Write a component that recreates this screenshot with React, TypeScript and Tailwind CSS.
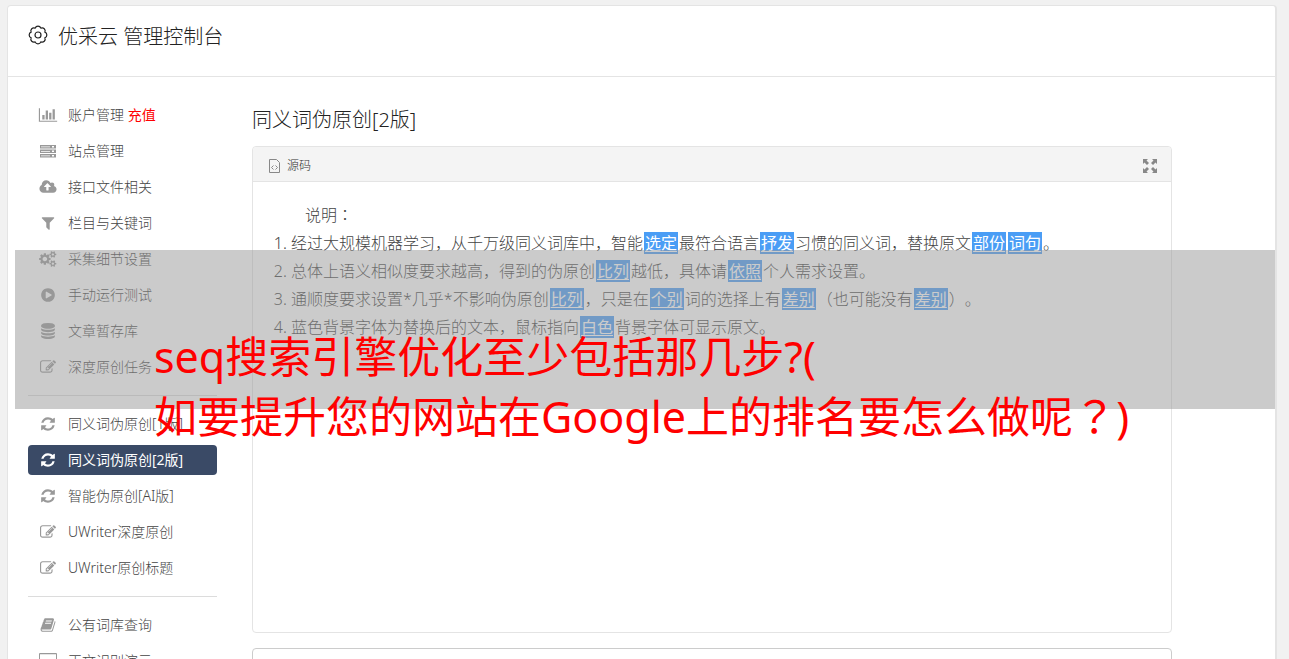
import { Fragment } from "react";
import type { ReactNode } from "react";

interface IconProps {
  viewBox?: string;
  className?: string;
  children: ReactNode;
}

function Icon({ viewBox = "0 0 1792 1792", className = "h-4 w-5", children }: IconProps) {
  return (
    <svg viewBox={viewBox} fill="currentColor" className={className} aria-hidden="true">
      {children}
    </svg>
  );
}

const icons = {
  chart: (
    <Icon viewBox="0 0 2048 1792">
      <path d="M640 896v512h-256v-512h256zm384-512v1024h-256v-1024h256zm1024 1152v128h-2048v-1536h128v1408h1920zm-640-896v768h-256v-768h256zm384-384v1152h-256v-1152h256z" />
    </Icon>
  ),
  server: (
    <Icon viewBox="0 0 20 16">
      <path
        fillRule="evenodd"
        d="M2 2h16v3.500h-16zM3 3.500v.8h9v-.8zM14 3v1.500h2v-1.500zM2 6.500h16v3.500h-16zM3 8v.8h9v-.8zM14 7.500v1.500h2v-1.500zM2 11h16v3.500h-16zM3 12.500v.8h9v-.8zM14 12v1.500h2v-1.500z"
      />
    </Icon>
  ),
  upload: (
    <Icon viewBox="-64 0 1920 1792">
      <path d="M1216 864q0-14-9-23l-352-352q-9-9-23-9t-23 9l-351 351q-10 12-10 24 0 14 9 23t23 9h224v352q0 13 9.500 22.500t22.500 9.500h192q13 0 22.500-9.500t9.500-22.500v-352h224q13 0 22.500-9.500t9.500-22.500zm640 288q0 159-112.500 271.500t-271.500 112.500h-1088q-185 0-316.500-131.500t-131.500-316.500q0-130 70-240t188-165q-2-30-2-43 0-212 150-362t362-150q156 0 285.500 87t188.500 231q71-62 166-62 106 0 181 75t75 181q0 76-41 138 130 31 213.500 135.500t83.500 238.500z" />
    </Icon>
  ),
  filter: (
    <Icon>
      <path d="M1595 295q17 41-14 70l-493 493v742q0 42-39 59-13 5-25 5-27 0-45-19l-256-256q-19-19-19-45v-486l-493-493q-31-29-14-70 17-39 59-39h1280q42 0 59 39z" />
    </Icon>
  ),
  cogs: (
    <Icon viewBox="0 0 1856 1792">
      <path d="M832 896q0-106-75-181t-181-75-181 75-75 181 75 181 181 75 181-75 75-181zm768 512q0-52-38-90t-90-38-90 38-38 90q0 53 37.500 90.500t90.500 37.500 90.500-37.500 37.500-90.500zm0-1024q0-52-38-90t-90-38-90 38-38 90q0 53 37.500 90.500t90.500 37.500 90.500-37.500 37.500-90.500zm-384 421v185q0 10-7 19.500t-16 10.500l-155 24q-11 35-32 76 34 48 90 115 7 11 7 20 0 12-7 19-23 30-82.500 89.500t-78.500 59.500q-11 0-21-7l-115-90q-37 19-77 31-11 108-23 155-7 24-30 24h-186q-11 0-20-7.500t-10-17.500l-23-153q-34-10-75-31l-118 89q-7 7-20 7-11 0-21-8-144-133-144-160 0-9 7-19 10-14 41-53t47-61q-23-44-35-82l-152-24q-10-1-17-9.500t-7-19.500v-185q0-10 7-19.500t16-10.500l155-24q11-35 32-76-34-48-90-115-7-11-7-20 0-12 7-20 22-30 82-89t79-59q11 0 21 7l115 90q34-18 77-32 11-108 23-154 7-24 30-24h186q11 0 20 7.500t10 17.500l23 153q34 10 75 31l118-89q8-7 20-7 11 0 21 8 144 133 144 160 0 8-7 19-12 16-42 54t-45 60q23 48 34 82l152 23q10 2 17 10.500t7 19.500zm640 533v140q0 16-149 31-12 27-30 52 51 113 51 138 0 4-4 7-122 71-124 71-8 0-46-47t-52-68q-20 2-30 2t-30-2q-14 21-52 68t-46 47q-2 0-124-71-4-3-4-7 0-25 51-138-18-25-30-52-149-15-149-31v-140q0-16 149-31 13-29 30-52-51-113-51-138 0-4 4-7 4-2 35-20t59-34 30-16q8 0 46 46.500t52 67.500q20-2 30-2t30 2q51-71 92-112l6-2q4 0 124 70 4 3 4 7 0 25-51 138 17 23 30 52 149 15 149 31zm0-1024v140q0 16-149 31-12 27-30 52 51 113 51 138 0 4-4 7-122 71-124 71-8 0-46-47t-52-68q-20 2-30 2t-30-2q-14 21-52 68t-46 47q-2 0-124-71-4-3-4-7 0-25 51-138-18-25-30-52-149-15-149-31v-140q0-16 149-31 13-29 30-52-51-113-51-138 0-4 4-7 4-2 35-20t59-34 30-16q8 0 46 46.500t52 67.500q20-2 30-2t30 2q51-71 92-112l6-2q4 0 124 70 4 3 4 7 0 25-51 138 17 23 30 52 149 15 149 31z" />
    </Icon>
  ),
  play: (
    <Icon>
      <path d="M896 128q209 0 385.500 103t279.500 279.500 103 385.500-103 385.500-279.500 279.500-385.500 103-385.500-103-279.500-279.500-103-385.500 103-385.500 279.500-279.500 385.500-103zm384 823q32-18 32-55t-32-55l-544-320q-31-19-64-1-32 19-32 56v640q0 37 32 56 16 8 32 8 17 0 32-9z" />
    </Icon>
  ),
  database: (
    <Icon>
      <path d="M896 768q237 0 443-43t325-127v170q0 69-103 128t-280 93.500-385 34.500-385-34.500-280-93.500-103-128v-170q119 84 325 127t443 43zm0 768q237 0 443-43t325-127v170q0 69-103 128t-280 93.500-385 34.500-385-34.500-280-93.500-103-128v-170q119 84 325 127t443 43zm0-384q237 0 443-43t325-127v170q0 69-103 128t-280 93.500-385 34.500-385-34.500-280-93.500-103-128v-170q119 84 325 127t443 43zm0-1152q208 0 385 34.500t280 93.500 103 128v128q0 69-103 128t-280 93.500-385 34.500-385-34.500-280-93.500-103-128v-128q0-69 103-128t280-93.500 385-34.500z" />
    </Icon>
  ),
  edit: (
    <Icon>
      <path d="M888 1184l116-116-152-152-116 116v56h96v96h56zm440-720q-16-16-33 1l-350 350q-17 17-1 33t33-1l350-350q17-17 1-33zm80 594v190q0 119-84.500 203.500t-203.500 84.500h-832q-119 0-203.500-84.500t-84.500-203.500v-832q0-119 84.500-203.500t203.500-84.500h832q63 0 117 25 15 7 18 23 3 17-9 29l-49 49q-14 14-32 8-23-6-45-6h-832q-66 0-113 47t-47 113v832q0 66 47 113t113 47h832q66 0 113-47t47-113v-126q0-13 9-22l64-64q15-15 35-7t20 29zm-96-738l288 288-672 672h-288v-288zm444 132l-92 92-288-288 92-92q28-28 68-28t68 28l152 152q28 28 28 68t-28 68z" />
    </Icon>
  ),
  refresh: (
    <Icon>
      <path d="M1639 1056q0 5-1 7-64 268-268 434.500t-478 166.500q-146 0-282.500-55t-243.500-157l-129 129q-19 19-45 19t-45-19-19-45v-448q0-26 19-45t45-19h448q26 0 45 19t19 45-19 45l-137 137q71 66 161 102t187 36q134 0 250-65t186-179q11-17 53-117 8-23 30-23h192q13 0 22.500 9.500t9.500 22.500zm25-800v448q0 26-19 45t-45 19h-448q-26 0-45-19t-19-45 19-45l138-138q-148-137-349-137-134 0-250 65t-186 179q-11 17-53 117-8 23-30 23h-199q-13 0-22.500-9.500t-9.500-22.500v-7q65-268 270-434.500t480-166.500q146 0 284 55.500t245 156.500l130-129q19-19 45-19t45 19 19 45z" />
    </Icon>
  ),
  book: (
    <Icon>
      <path d="M1703 478q40 57 18 129l-275 906q-19 64-76.500 107.500t-122.500 43.500h-923q-77 0-148.500-53.500t-99.500-131.500q-24-67-2-127 0-4 3-27t4-37q1-8-3-21.500t-3-19.500q2-11 8-21t16.500-23.500 16.500-23.500q23-38 45-91.500t30-91.500q3-10 .5-30t-.5-28q3-11 17-28t17-23q21-36 42-92t25-90q1-9-2.500-32t.5-28q4-13 22-30.500t22-22.500q19-26 42.500-84.500t27.500-96.500q1-8-3-25.500t-2-26.500q2-8 9-18t18-23 17-21q8-12 16.500-30.500t15-35 16-36 19.500-32 26.500-23.500 36-11.500 47.500 5.500l-1 3q38-9 51-9h761q74 0 114 56t18 130l-274 906q-36 119-71.500 153.500t-128.500 34.500h-869q-27 0-38 15-11 16-1 43 24 70 144 70h923q29 0 56-15.500t35-41.500l300-987q7-22 5-57 38 15 59 43zm-1064 2q-4 13 2 22.500t20 9.500h608q13 0 25.500-9.500t16.500-22.500l21-64q4-13-2-22.500t-20-9.500h-608q-13 0-25.500 9.500t-16.500 22.500zm-83 256q-4 13 2 22.500t20 9.500h608q13 0 25.500-9.500t16.500-22.500l21-64q4-13-2-22.500t-20-9.500h-608q-13 0-25.500 9.500t-16.500 22.500z" />
    </Icon>
  ),
  desktop: (
    <Icon viewBox="0 0 20 16">
      <path fillRule="evenodd" d="M2 0h16a1 1 0 0 1 1 1v11a1 1 0 0 1-1 1h-6v2h2v1h-8v-1h2v-2h-6a1 1 0 0 1-1-1v-11a1 1 0 0 1 1-1zm0 1.200v9h16v-9z" />
    </Icon>
  ),
};

interface MenuItem {
  icon: keyof typeof icons;
  label: string;
  extra?: string;
  active?: boolean;
}

const menu: MenuItem[][] = [
  [
    { icon: "chart", label: "账户管理", extra: "充值" },
    { icon: "server", label: "站点管理" },
    { icon: "upload", label: "接口文件相关" },
    { icon: "filter", label: "栏目与关键词" },
    { icon: "cogs", label: "采集细节设置" },
    { icon: "play", label: "手动运行测试" },
    { icon: "database", label: "文章暂存库" },
    { icon: "edit", label: "深度原创任务" },
  ],
  [
    { icon: "refresh", label: "同义词伪原创[1版]" },
    { icon: "refresh", label: "同义词伪原创[2版]", active: true },
    { icon: "refresh", label: "智能伪原创[AI版]" },
    { icon: "edit", label: "UWriter深度原创" },
    { icon: "edit", label: "UWriter原创标题" },
  ],
  [
    { icon: "book", label: "公有词库查询" },
    { icon: "desktop", label: "正文识别演示" },
  ],
];

function SideMenu() {
  return (
    <nav className="w-[189px] shrink-0">
      {menu.map((group, i) => (
        <Fragment key={i}>
          {i > 0 && <hr className="my-[13px] border-[#dcdcdc]" />}
          <ul className="flex flex-col gap-1.5">
            {group.map((item) => (
              <li key={item.label}>
                <a
                  href="#"
                  className={`flex h-[30px] items-center gap-2.5 rounded pl-2.5 text-sm whitespace-nowrap ${
                    item.active ? "bg-[#3a4a66] font-normal text-white" : "text-[#444]"
                  }`}
                >
                  <span className={item.active ? "text-white" : "text-[#999]"}>{icons[item.icon]}</span>
                  <span>
                    {item.label}
                    {item.extra && <span className="font-normal text-[#f00]"> {item.extra}</span>}
                  </span>
                </a>
              </li>
            ))}
          </ul>
        </Fragment>
      ))}
    </nav>
  );
}

function Word({ children }: { children: ReactNode }) {
  return (
    <span className="mx-px bg-[#4a9df5] px-px font-normal text-white underline underline-offset-2">{children}</span>
  );
}

// full-width punctuation centred in its em box
function Mark({ children }: { children: ReactNode }) {
  return <span className="font-['Noto_Sans','Noto_Sans_CJK_TC',sans-serif]">{children}</span>;
}

function SourceCard() {
  return (
    <section className="flex h-[487px] flex-col rounded border border-[#e4e4e4]">
      <header className="flex h-[35px] items-center justify-between rounded-t border-b border-[#e4e4e4] bg-[#f4f4f4] px-3.5 pt-1">
        <span className="flex items-center gap-1.5 text-xs text-[#333]">
          <svg viewBox="0 0 14 16" className="h-4 w-3.5" fill="none" stroke="#888" aria-hidden="true">
            <path d="M2.500 1.500h7l3 3v10h-10z" />
            <path d="M6.500 7.500l-2 2 2 2M8.500 7.500l2 2-2 2" />
          </svg>
          源码
        </span>
        <button type="button" aria-label="全屏" className="text-[#888]">
          <svg viewBox="0 0 14 14" className="size-3.5" fill="currentColor" aria-hidden="true">
            <path d="M0 0h5l-1.500 1.500 2.500 2.500-2 2-2.500-2.500-1.500 1.500zM14 0v5l-1.500-1.500-2.500 2.500-2-2 2.500-2.500-1.500-1.500zM0 14v-5l1.500 1.500 2.500-2.500 2 2-2.500 2.500 1.500 1.500zM14 14h-5l1.500-1.500-2.500-2.500 2-2 2.500 2.500 1.500-1.500z" />
          </svg>
        </button>
      </header>
      <div className="px-5 py-[19px] text-base leading-7 text-[#444] [text-spacing-trim:space-all]">
        <p className="indent-8">
          说明<Mark>：</Mark>
        </p>
        <ol className="list-decimal pl-[18px]">
          <li>
            经过大规模机器学习，从千万级同义词库中，智能<Word>选定</Word>最符合语言<Word>抒发</Word>
            习惯的同义词，替换原文<Word>部份</Word><Word>词句</Word>。
          </li>
          <li>
            总体上语义相似度要求越高，得到的伪原创<Word>比列</Word>越低，具体请<Word>依照</Word>个人需求设置。
          </li>
          <li>
            通顺度要求设置*几乎*不影响伪原创<Word>比列</Word>，只是在<Word>个别</Word>词的选择上有
            <Word>差别</Word>
            <Mark>（</Mark>也可能没有<Word>差别</Word>
            <Mark>）</Mark>。
          </li>
          <li>
            蓝色背景字体为替换后的文本，鼠标指向<Word>白色</Word>背景字体可显示原文。
          </li>
        </ol>
      </div>
    </section>
  );
}

export default function App() {
  return (
    <div className="relative flex h-screen flex-col overflow-hidden bg-[#f1f1f1] pt-[5px] pr-3 pl-[7px] font-['Noto_Sans','Noto_Sans_CJK_SC',sans-serif] font-light">
      <div className="flex-1 rounded-t border border-r-2 border-b-0 border-[#e4e4e4] bg-white">
        <header className="flex h-[71px] items-start gap-2.5 border-b border-[#e4e4e4] px-5 pt-[17px] text-[#222]">
          <svg viewBox="0 0 20 20" className="mt-0.5 size-5" fill="none" stroke="currentColor" strokeWidth="1.200" aria-hidden="true">
            <circle cx="10" cy="10" r="3" />
            <path
              strokeLinejoin="round"
              d="M7.170 3.160A3 3 0 0 1 12.830 3.160A3 3 0 0 1 16.840 7.170A3 3 0 0 1 16.840 12.830A3 3 0 0 1 12.830 16.840A3 3 0 0 1 7.170 16.840A3 3 0 0 1 3.160 12.830A3 3 0 0 1 3.160 7.170A3 3 0 0 1 7.170 3.160z"
            />
          </svg>
          <h1 className="text-xl leading-7">优采云 管理控制台</h1>
        </header>
        <div className="flex gap-[35px] pt-[23px] pr-[103px] pl-5">
          <SideMenu />
          <main className="min-w-0 flex-1">
            <h2 className="mt-[5px] mb-[11px] text-xl leading-[30px] text-[#222]">同义词伪原创[2版]</h2>
            <SourceCard />
            <textarea aria-label="源码内容" className="mt-[15px] block h-24 w-full resize-none rounded border border-[#ccc]" />
          </main>
        </div>
      </div>

      <div className="absolute top-[250px] right-[14px] left-[15px] h-[159px] bg-[#979797]/50" />
      <p className="absolute top-[327px] left-[154px] text-[43px] leading-[60px] font-normal whitespace-nowrap text-[#f00]">
        seq搜索引擎优化至少包括那几步?(
        <br />
        如要提升您的网站在Google上的排名要怎么做呢<Mark>？</Mark>)
      </p>
    </div>
  );
}
